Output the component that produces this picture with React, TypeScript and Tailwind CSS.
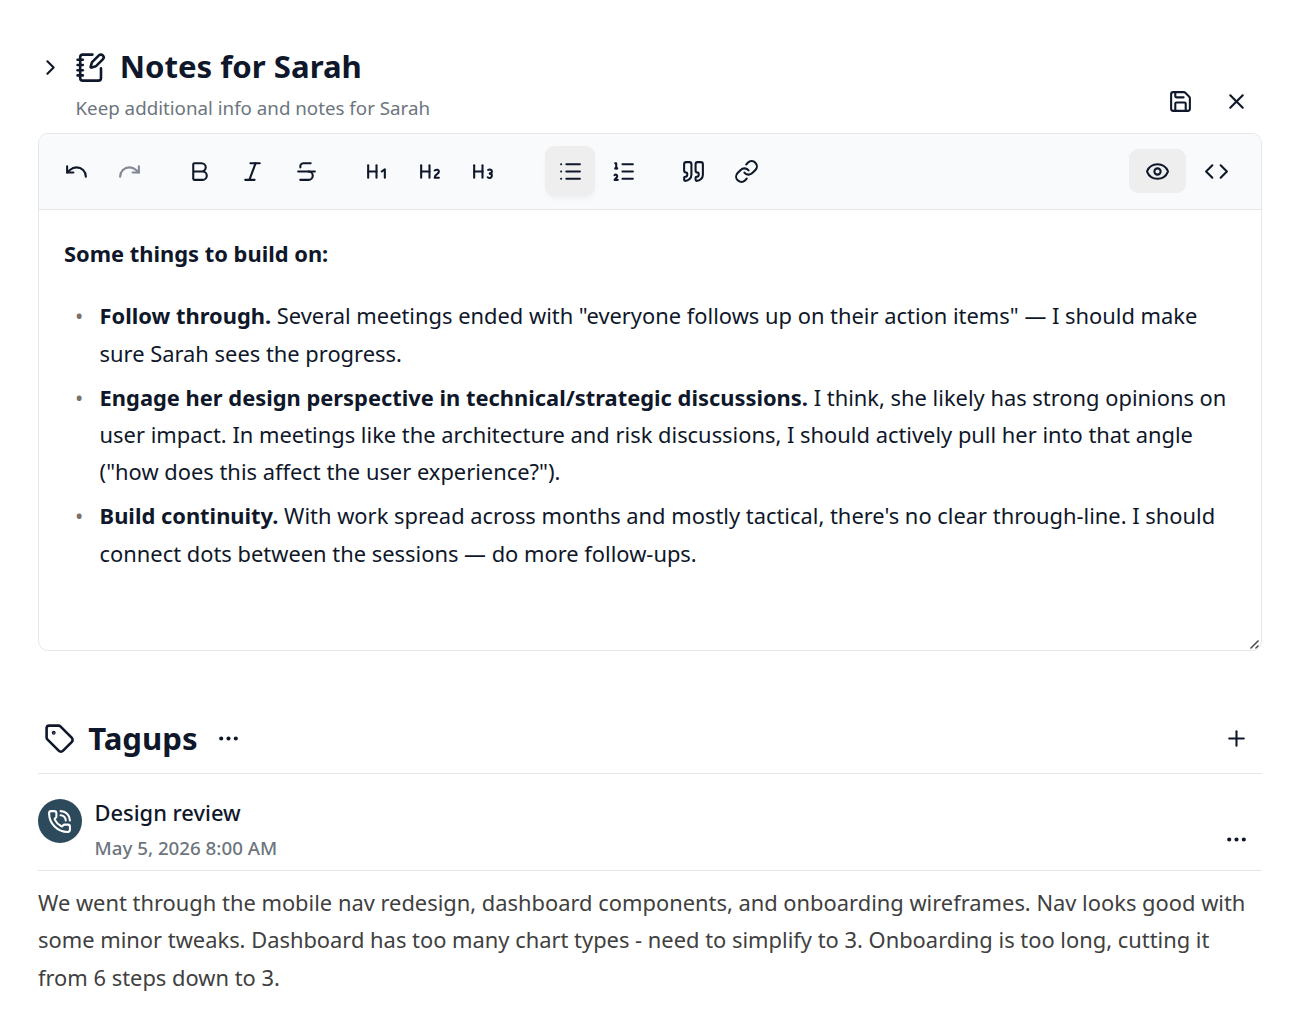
import type { ReactNode } from 'react';
import {
  Bold,
  ChevronRight,
  Code,
  Ellipsis,
  Eye,
  Heading1,
  Heading2,
  Heading3,
  Italic,
  Link,
  List,
  ListOrdered,
  NotebookPen,
  PhoneCall,
  Plus,
  Quote,
  Redo,
  Save,
  Strikethrough,
  Tag,
  Undo,
  X,
} from 'lucide-react';
import type { LucideIcon } from 'lucide-react';

const ICON = 25;

function ToolButton({ icon: Icon, label, active, disabled }: { icon: LucideIcon; label: string; active?: boolean; disabled?: boolean }) {
  return (
    <button
      aria-label={label}
      disabled={disabled}
      className={`flex size-[50px] items-center justify-center rounded-[9px] disabled:opacity-50 ${active ? 'bg-[#eeeeee] shadow-md shadow-black/3' : ''}`}
    >
      <Icon size={ICON} />
    </button>
  );
}

function ToolGroup({ children }: { children: ReactNode }) {
  return <div className="flex gap-[3.4px]">{children}</div>;
}

const notes = [
  {
    title: 'Follow through.',
    text: 'Several meetings ended with "everyone follows up on their action items" — I should make sure Sarah sees the progress.',
  },
  {
    title: 'Engage her design perspective in technical/strategic discussions.',
    text: 'I think, she likely has strong opinions on user impact. In meetings like the architecture and risk discussions, I should actively pull her into that angle ("how does this affect the user experience?").',
  },
  {
    title: 'Build continuity.',
    text: "With work spread across months and mostly tactical, there's no clear through-line. I should connect dots between the sessions — do more follow-ups.",
  },
];

function NotesEditor() {
  return (
    <div className="relative h-[518px] overflow-hidden rounded-[10px] border border-[#e5e7eb]">
      <div className="flex h-[76px] items-center justify-between border-b border-[#e5e7eb] bg-[#f9fafc] pr-4 pb-px pl-3">
        <div className="flex gap-5">
          <ToolGroup>
            <ToolButton icon={Undo} label="Undo" />
            <ToolButton icon={Redo} label="Redo" disabled />
          </ToolGroup>
          <ToolGroup>
            <ToolButton icon={Bold} label="Bold" />
            <ToolButton icon={Italic} label="Italic" />
            <ToolButton icon={Strikethrough} label="Strikethrough" />
          </ToolGroup>
          <ToolGroup>
            <ToolButton icon={Heading1} label="Heading 1" />
            <ToolButton icon={Heading2} label="Heading 2" />
            <ToolButton icon={Heading3} label="Heading 3" />
          </ToolGroup>
          <div className="ml-[17.2px]">
            <ToolGroup>
              <ToolButton icon={List} label="Bullet list" active />
              <ToolButton icon={ListOrdered} label="Numbered list" />
            </ToolGroup>
          </div>
          <ToolGroup>
            <ToolButton icon={Quote} label="Quote" />
            <ToolButton icon={Link} label="Link" />
          </ToolGroup>
        </div>
        <div className="flex items-center gap-[2px]">
          <button aria-label="Preview" className="flex h-11 w-[57px] items-center justify-center rounded-[9px] bg-[#eeeeee]">
            <Eye size={ICON} />
          </button>
          <button aria-label="Source" className="flex h-11 w-[57px] items-center justify-center">
            <Code size={ICON} />
          </button>
        </div>
      </div>

      <div className="px-[25px] pt-[25px]">
        <p className="font-bold">Some things to build on:</p>
        <ul className="mt-[24.8px] flex flex-col gap-[6.5px]">
          {notes.map((note) => (
            <li key={note.title} className="flex">
              <span className="w-[35.6px] shrink-0 pl-[11px] text-[#78716c]">•</span>
              <p>
                <strong>{note.title}</strong> {note.text}
              </p>
            </li>
          ))}
        </ul>
      </div>

      <svg className="absolute right-0 bottom-0 size-3" viewBox="0 0 12 12" fill="none" stroke="#46464a" strokeWidth="1.5">
        <path d="M1.5 10.5 9.5 2.5M6.5 10.5 9.5 7.5" />
      </svg>
    </div>
  );
}

export default function App() {
  return (
    <main className="h-[1034px] overflow-hidden bg-white pt-[45px] pr-[39px] pl-[38px] font-['Noto_Sans',sans-serif] text-[21.88px] leading-[37.4px] text-[#0f172a]">
      <header className="flex h-[88px] justify-between">
        <div className="flex">
          <ChevronRight size={ICON} className="mt-[10px] mr-[12.5px]" />
          <div>
            <h1 className="flex h-11 items-center gap-[13px] text-[31.15px] font-bold">
              <NotebookPen size={31.2} className="relative top-[0.5px] -left-[0.5px]" />
              Notes for Sarah
            </h1>
            <p className="mt-[5px] text-[18.74px] leading-7 text-[#6c757d]">Keep additional info and notes for Sarah</p>
          </div>
        </div>
        <div className="mt-11 mr-[13px] flex gap-[31px]">
          <Save size={ICON} />
          <X size={ICON} />
        </div>
      </header>

      <NotesEditor />

      <section className="mt-[53px]">
        <div className="flex h-[70px] items-center border-b border-[#e5e7eb] pr-[13px] pl-[6px]">
          <Tag size={31.2} />
          <h2 className="ml-[13px] text-[31.15px] font-bold">Tagups</h2>
          <Ellipsis size={ICON} className="ml-[18.5px]" />
          <Plus size={ICON} className="ml-auto" />
        </div>

        <article>
          <div className="flex h-[97px] border-b border-[#e5e7eb] pr-[13px]">
            <div className="mt-[25px] flex size-11 items-center justify-center rounded-full bg-[#2d4a5c] pr-px text-white">
              <PhoneCall size={ICON} />
            </div>
            <div className="mt-[21px] ml-[12.5px]">
              <h3 className="leading-[35px] font-medium">Design review</h3>
              <time className="block text-[18.74px] leading-[35px] font-medium text-[#6c757d]">May 5, 2026 8:00 AM</time>
            </div>
            <Ellipsis size={ICON} className="mt-[53px] ml-auto" />
          </div>
          <p className="mt-[13px] text-[#404040]">
            We went through the mobile nav redesign, dashboard components, and onboarding wireframes. Nav looks good with some minor tweaks. Dashboard has too
            many chart types - need to simplify to 3. Onboarding is too long, cutting it from 6 steps down to 3.
          </p>
        </article>
      </section>
    </main>
  );
}
